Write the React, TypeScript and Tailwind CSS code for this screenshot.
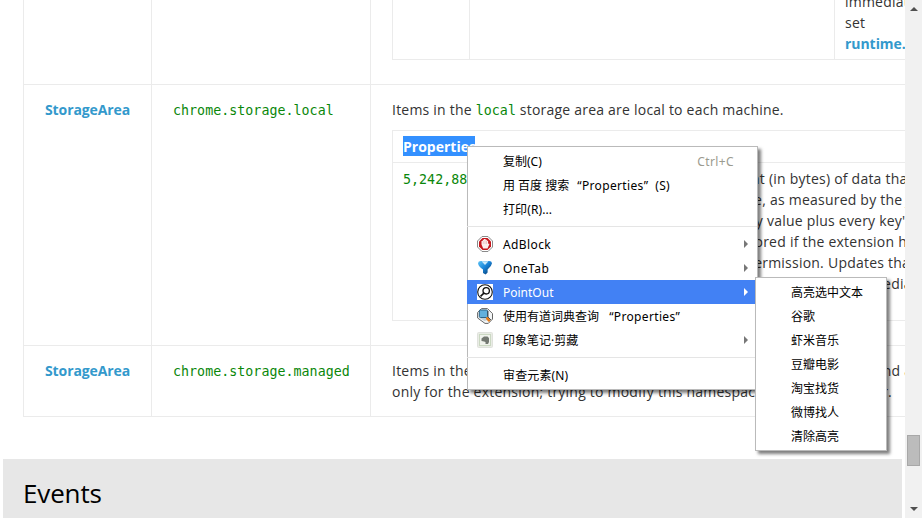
import type { ReactNode } from "react";

const Code = ({ children }: { children: ReactNode }) => (
  <code className="font-['DejaVu_Sans_Mono',monospace] text-[13.3px] leading-[1px] tracking-[0.03px] text-[#0a870a]">{children}</code>
);

const AdBlockIcon = () => (
  <svg viewBox="0 0 16 16" className="size-4">
    <path d="M5 .5h6L15.500 5v6L11 15.500H5L.5 11V5z" fill="#fff" stroke="#8a8a8a" />
    <path d="M5.500 2h5L14 5.500v5L10.500 14h-5L2 10.500v-5z" fill="#c4161c" />
    <path d="M4.500 8.500V5h1.200V3.700h1.200V3h1.700v.7h1.300v1h1.200v3.200l.6-.5.8.6-2 4.500H6.200z" fill="#fbeeee" />
    <path d="M6.300 5v3M8 4.500V8M9.500 5v3" stroke="#dda0a0" strokeWidth=".5" />
  </svg>
);

const OneTabIcon = () => (
  <svg viewBox="0 0 16 16" className="size-4">
    <defs>
      <linearGradient id="funnel" x1="0" x2="1" y1="0" y2="1">
        <stop offset="0" stopColor="#5fc4f6" />
        <stop offset=".45" stopColor="#1a86da" />
        <stop offset="1" stopColor="#062f60" />
      </linearGradient>
    </defs>
    <path d="M1 3.200Q1.200 1 4 1h8q2.800 0 3 2.200Q14.500 6.500 10.600 9.500v3L8.600 14.500 6 13V9.500Q1.500 6.500 1 3.200z" fill="url(#funnel)" />
    <path d="M4.500 1.300h7L8 5z" fill="#cdeafa" />
  </svg>
);

const PointOutIcon = () => (
  <svg viewBox="0 0 16 16" className="size-4">
    <rect width="16" height="16" fill="#fff" />
    <circle cx="8" cy="8" r="7.300" fill="none" stroke="#111" strokeWidth="1.100" />
    <circle cx="9.200" cy="6.800" r="3.200" fill="none" stroke="#111" strokeWidth="1.300" />
    <path d="M6.900 9.200 3.500 12.300" stroke="#111" strokeWidth="1.600" />
  </svg>
);

const DictIcon = () => (
  <svg viewBox="0 0 16 16" className="size-4">
    <path d="M4.500.600h6l5 5v5.500L11.300 15.400H8L.600 10V4.500z" fill="#f4f6f7" stroke="#666" />
    <rect x="2.300" y="2" width="8.200" height="7.500" rx="1" fill="#62b0dc" stroke="#2d6487" />
    <path d="M2.500 10h7l1 2-3 1z" fill="#c3cfd5" />
    <path d="M10.300 10.300 12 12.300" stroke="#e57a16" strokeWidth="2.600" strokeLinecap="round" />
    <path d="M11 3v6l3 3" stroke="#444" fill="none" strokeWidth=".9" />
  </svg>
);

const ClipIcon = () => (
  <svg viewBox="0 0 16 16" className="size-4">
    <rect x=".5" y=".5" width="15" height="15" rx="1" fill="#e9ece5" stroke="#e0e2dd" />
    <rect x="2.500" y="2.500" width="11" height="11" fill="#f0f3ec" stroke="#cbd8c2" />
    <path d="M4.500 6.500 7 4.500h3.500L12 6v4l-1 2H8.500v-2L7 9.500 4.500 9z" fill="#747972" />
  </svg>
);

type Item = { label: ReactNode; icon?: ReactNode; hint?: string; sub?: boolean; active?: boolean };

const groups: Item[][] = [
  [
    { label: "复制(C)", hint: "Ctrl+C" },
    {
      label: (
        <>
          用 百度 搜索<span className="ml-[8px] tracking-[0.35px]">“Properties”</span>
          <span className="ml-[7px] tracking-[0.2px]">(S)</span>
        </>
      ),
    },
    { label: <span className="tracking-[0.1px]">打印(R)...</span> },
  ],
  [
    { label: <span className="tracking-[0.4px]">AdBlock</span>, icon: <AdBlockIcon />, sub: true },
    { label: <span className="tracking-[0.5px]">OneTab</span>, icon: <OneTabIcon />, sub: true },
    { label: "PointOut", icon: <PointOutIcon />, sub: true, active: true },
    {
      label: (
        <>
          使用有道词典查询 <span className="ml-[7px] tracking-[0.35px]">“Properties”</span>
        </>
      ),
      icon: <DictIcon />,
    },
    { label: "印象笔记·剪藏", icon: <ClipIcon />, sub: true },
  ],
  [{ label: <span className="tracking-[0.15px]">审查元素(N)</span> }],
];

const submenu = ["高亮选中文本", "谷歌", "虾米音乐", "豆瓣电影", "淘宝找货", "微博找人", "清除高亮"];

const MenuRow = ({ item, lowered }: { item: Item; lowered: boolean }) => (
  <div className={`-ml-px flex h-6 items-center pl-[10px] ${item.active ? "bg-[#4281f4] text-white" : ""}`}>
    <div className="w-[26px] shrink-0">{item.icon}</div>
    <div className={`grow whitespace-pre ${lowered ? "pt-0.5" : ""}`}>{item.label}</div>
    {item.hint && <div className="mr-[23px] tracking-[0.4px] text-[#9b9b8f]">{item.hint}</div>}
    {item.sub && (
      <svg viewBox="0 0 4 8" className={`mb-px mr-[9px] h-2 w-1 ${item.active ? "fill-white" : "fill-[#777]"}`}>
        <path d="M0 0 4 4 0 8z" />
      </svg>
    )}
  </div>
);

const menuText = "font-['Noto_Sans','Noto_Sans_CJK_SC',sans-serif] text-[12px] leading-6 tracking-normal text-black";

const quotaLines = [
  ["The maximum amount", "(in bytes) of data that can be", "w-[299px]"],
  ["stored in local storage,", "as measured by the JSON", "w-[300px]"],
  ["stringification of every", "value plus every key's length", "w-[297px]"],
  ["This value will be ignored", "if the extension has the", "w-[320px]"],
  ["unlimitedStorage permission.", "Updates that would", "w-[358px]"],
  ["cause this limit to be exceeded fail", "immediately", "w-[383px]"],
];

export default function App() {
  return (
    <div className="relative flex h-[518px] w-[922px] overflow-hidden bg-white font-['Open_Sans',sans-serif] text-[14px] leading-[21px] tracking-[0.22px] text-[#333]">
      <main className="flex h-full w-[905px] flex-col overflow-hidden">
        <div className="ml-[23px] grid w-[960px] shrink-0 grid-cols-[128px_219px_613px] grid-rows-[85px_261px_71px] border-l border-[#ebebeb]">
          <div className="border-b border-r border-[#ebebeb]" />
          <div className="border-b border-r border-[#ebebeb]" />
          <div className="border-b border-[#ebebeb] pl-[21px]">
            <div className="grid h-[60px] grid-cols-[77px_365px_1fr] border-b border-l border-[#ebebeb]">
              <div className="border-r border-[#ebebeb]" />
              <div className="border-r border-[#ebebeb]" />
              <div className="-mt-[9px] pl-[10px]">
                <div>immediately</div>
                <div>set</div>
                <b className="font-bold tracking-[-0.05px] text-[#3399cc]">runtime.lastError</b>
              </div>
            </div>
          </div>

          <div className="border-b border-r border-[#ebebeb] pl-[21px] pt-[14px] font-bold tracking-[-0.1px] text-[#3399cc]">StorageArea</div>
          <div className="border-b border-r border-[#ebebeb] pl-[21px] pt-[14px]"><Code>chrome.storage.local</Code></div>
          <div className="border-b border-[#ebebeb] pl-[21px] pt-[14px]">
            <div className="whitespace-nowrap">Items in the <Code>local</Code> storage area are local to each machine.</div>
            <div className="mt-[10px] h-[191px] border-y border-l border-[#ebebeb]">
              <div className="h-8 border-b border-[#ebebeb] pl-[10px] pt-[5px] font-bold tracking-normal">
                <span className="block h-5 w-[72px] bg-[#3390ff] text-white">Properties</span>
              </div>
              <div className="flex pt-[5px]">
                <div className="w-[77px] shrink-0 overflow-hidden pl-[10px]"><Code>5,242,880</Code></div>
                <div>
                  {quotaLines.map(([before, after, width]) => (
                    <div key={after} className="flex whitespace-pre">
                      <div className={`${width} shrink-0 pr-1 text-right`}>{before}</div>
                      <div>{after}</div>
                    </div>
                  ))}
                </div>
              </div>
            </div>
          </div>

          <div className="border-b border-r border-[#ebebeb] pl-[21px] pt-[14px] font-bold tracking-[-0.1px] text-[#3399cc]">StorageArea</div>
          <div className="border-b border-r border-[#ebebeb] pl-[21px] pt-[14px]"><Code>chrome.storage.managed</Code></div>
          <div className="whitespace-nowrap border-b border-[#ebebeb] pl-[21px] pt-[14px]">
            <div>Items in the <Code>managed</Code> storage area are set by the domain administrator, and are read-</div>
            <div>only for the extension; trying to modify this namespace results in an error.</div>
          </div>
        </div>
        <h2 className="ml-[3px] mt-[42px] h-[60px] w-[899px] bg-[#e7e7e7] pl-5 pt-4 text-[26px] leading-[36px] tracking-[-0.15px] text-black">Events</h2>
      </main>

      <aside className="flex w-[17px] flex-col items-center bg-[#f1f1f1]">
        <svg viewBox="0 0 8 4" className="mt-[7px] h-1 w-2 fill-[#505050]"><path d="M4 0 8 4H0z" /></svg>
        <div className="mt-[424px] h-[31px] w-[13px] border border-[#a8a8a8] bg-[#bcbcbc]" />
        <svg viewBox="0 0 8 4" className="mt-[41px] h-1 w-2 fill-[#505050]"><path d="M0 0h8L4 4z" /></svg>
      </aside>

      <div className={`absolute left-[467px] top-[146px] h-[244px] w-[291px] border border-[#bababa] bg-white pt-[3px] shadow-[3px_3px_3px_rgba(0,0,0,0.5)] ${menuText}`}>
        {groups.map((items, i) => (
          <div key={i}>
            {i > 0 && <div className={`-ml-px mb-[5px] h-px bg-[#e5e5e5] ${i === 1 ? "mt-1" : "mt-[5px]"}`} />}
            {items.map((item, j) => <MenuRow key={j} item={item} lowered={i > 0} />)}
          </div>
        ))}
      </div>

      <div className={`absolute left-[755px] top-[277px] h-[174px] w-[132px] border border-[#bababa] bg-white pl-[35px] pt-[3px] shadow-[3px_3px_3px_rgba(0,0,0,0.5)] ${menuText}`}>
        {submenu.map((label) => <div key={label}>{label}</div>)}
      </div>
    </div>
  );
}
